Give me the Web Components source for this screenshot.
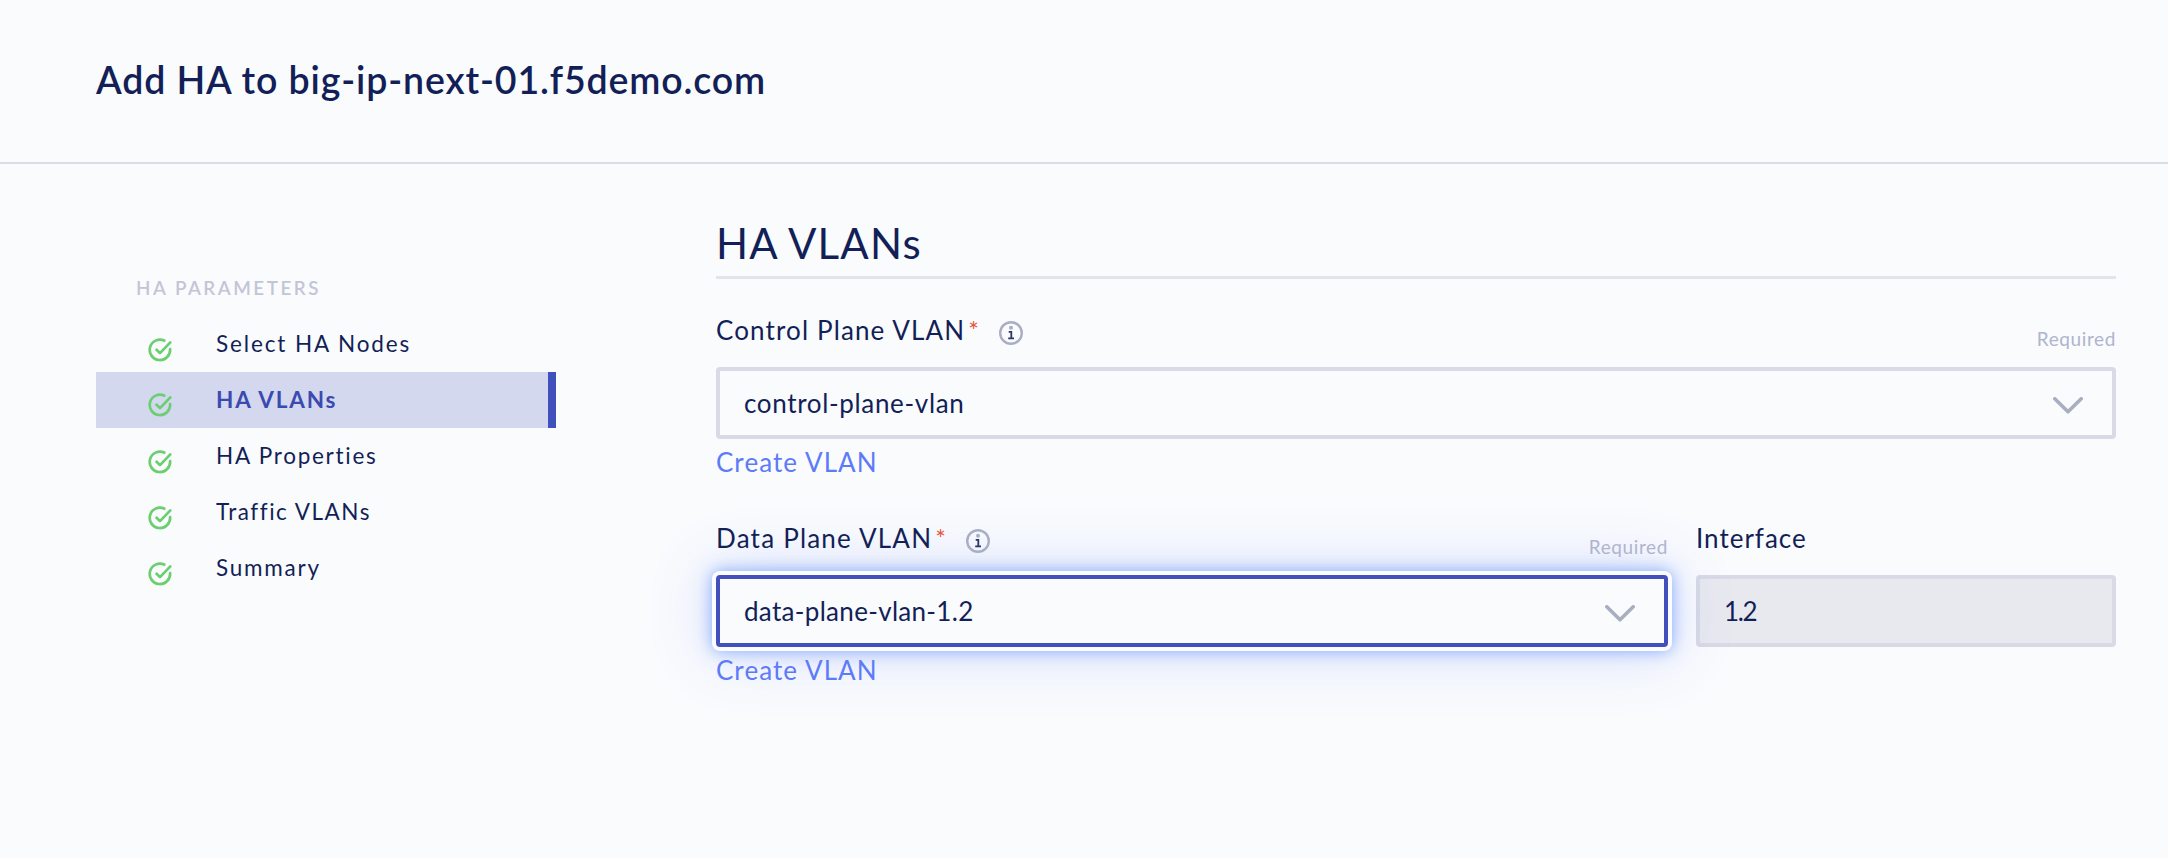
<!DOCTYPE html>
<html lang="en">
<head>
<meta charset="utf-8">
<title>Add HA</title>
<style>
html, body { margin: 0; height: 100%; }
body { background: #f9fbfd; color: #131f57; font-family: Lato, "Open Sans", sans-serif; overflow: hidden; }
</style>
</head>
<body>
<ha-page></ha-page>

<template id="t-page">
  <style>
    :host { display: block; height: 858px; }
    header { box-sizing: border-box; height: 164px; border-bottom: 2px solid #dadce6; padding: 0 0 2px 96px; display: flex; align-items: center; }
    h1 { margin: 0; font-size: 37.5px; font-weight: 600; letter-spacing: .86px; line-height: 48px; white-space: nowrap; }
    .body { display: grid; grid-template-columns: 460px 1400px; column-gap: 160px; padding-left: 96px; }
    h2 { box-sizing: border-box; height: 115px; margin: 0 0 28px; padding-top: 54px; line-height: 50px; font-size: 42px; font-weight: 400; letter-spacing: 1.2px; border-bottom: 3px solid #e2e3eb; }
    .row { display: grid; grid-template-columns: 952px 420px; column-gap: 28px; margin-top: 32px; }
  </style>
  <header><h1>Add HA to big-ip-next-01.f5demo.com</h1></header>
  <div class="body">
    <ha-steps>
      <ha-step style="--ls:1.874px">Select HA Nodes</ha-step>
      <ha-step active style="--ls:1.812px">HA VLANs</ha-step>
      <ha-step style="--ls:1.74px">HA Properties</ha-step>
      <ha-step style="--ls:1.512px">Traffic VLANs</ha-step>
      <ha-step style="--ls:1.765px">Summary</ha-step>
    </ha-steps>
    <main>
      <h2>HA VLANs</h2>
      <ha-field required link style="--label-ls:1.13px;--value-ls:.66px">
        <span slot="label">Control Plane VLAN</span>control-plane-vlan<span slot="link">Create VLAN</span>
      </ha-field>
      <div class="row">
        <ha-field required link focused style="--label-ls:1.21px;--value-ls:.31px">
          <span slot="label">Data Plane VLAN</span>data-plane-vlan-1.2<span slot="link">Create VLAN</span>
        </ha-field>
        <ha-field disabled style="--label-ls:1px;--value-ls:-1.4px">
          <span slot="label">Interface</span>1.2
        </ha-field>
      </div>
    </main>
  </div>
</template>

<template id="t-steps">
  <style>
    :host { display: block; padding-top: 107px; }
    h3 { box-sizing: border-box; margin: 0 0 14px; padding: 1px 0 0 40px; height: 31px; line-height: 31px; font-size: 18.8px; font-weight: 600; letter-spacing: 2.52px; color: #c3c5d6; }
  </style>
  <h3>HA PARAMETERS</h3>
  <slot></slot>
</template>

<template id="t-step">
  <style>
    :host { box-sizing: border-box; display: grid; grid-template-columns: 24px auto; column-gap: 44px; align-items: center; height: 56px; padding-left: 52px; font-size: 22.5px; letter-spacing: var(--ls); color: #131f57; }
    :host([active]) { background: #d4d8ee; border-right: 8px solid #4150bd; color: #3b4ab0; font-weight: 700; }
    svg { display: block; margin-top: 12px; }
    :host([active]) svg { margin-top: 10px; }
    .text { line-height: 30px; white-space: nowrap; }
  </style>
  <svg width="24" height="24" viewBox="0 0 24 24" fill="none" stroke="#6bce70" stroke-width="2.7" stroke-linecap="round" stroke-linejoin="round">
    <path d="M16.2 2.6A10.2 10.2 0 1 0 22.1 11.2"/><path d="M8.6 11.7L12 15.1L22.3 4.4"/>
  </svg>
  <span class="text"><slot></slot></span>
</template>

<template id="t-field">
  <style>
    :host { display: block; font-size: 26px; }
    .head { display: flex; align-items: center; height: 44px; margin-bottom: 16px; line-height: 44px; white-space: nowrap; }
    .label { letter-spacing: var(--label-ls); padding-top: 2px; }
    .star { width: 12px; margin-left: 3px; padding-top: 2px; font-size: 25px; line-height: 44px; color: #e8553a; }
    .info { margin: 8px 0 0 19px; }
    .req { margin-left: auto; padding-top: 19px; font-size: 19px; letter-spacing: .619px; color: #b0b4ce; }
    .box { box-sizing: border-box; height: 72px; border: 4px solid #d8dae5; border-radius: 4px; padding: 0 29px 0 24px; display: flex; align-items: center; justify-content: space-between; background: #f9fbfd; }
    .value { letter-spacing: var(--value-ls); line-height: 40px; }
    .chev { margin-top: 0; }
    .link { height: 43px; padding-top: 1px; line-height: 44px; color: #5d7af8; letter-spacing: 1.08px; }
    :host([focused]) .box { position: relative; border-color: #4150bd; box-shadow: 0 0 0 4px #fbfcff, 0 0 16px 4px rgba(70,125,250,.6), 0 0 62px 7px rgba(84,112,250,.2); }
    :host([focused]) .head, :host([focused]) .link { position: relative; z-index: 1; }
    :host([disabled]) .box { background: #e8e9ef; }
    :host([disabled]) .chev, :host(:not([required])) .star, :host(:not([required])) .info, :host(:not([required])) .req, :host(:not([link])) .link { display: none; }
  </style>
  <div class="head">
    <span class="label"><slot name="label"></slot></span><span class="star">*</span>
    <svg class="info" width="24" height="24" viewBox="0 0 24 24" fill="none">
      <circle cx="12" cy="12" r="10.8" stroke="#a9aec5" stroke-width="2.4"/>
      <circle cx="12" cy="6.7" r="2" fill="#a9aec5"/>
      <path d="M9.7 10.8H12.3V17.3M9.2 17.3H15" stroke="#2b3568" stroke-width="1.8"/>
    </svg>
    <span class="req">Required</span>
  </div>
  <div class="box">
    <span class="value"><slot></slot></span>
    <svg class="chev" width="30" height="17" viewBox="0 0 30 17" fill="none" stroke="#a9aec2" stroke-width="3.6" stroke-linecap="round" stroke-linejoin="round" style="margin-top:4px"><path d="M1.8 1.8L15 14.8L28.2 1.8"/></svg>
  </div>
  <div class="link"><slot name="link"></slot></div>
</template>

<script>
const define = (name, id) => customElements.define(name, class extends HTMLElement {
  constructor() {
    super();
    this.attachShadow({ mode: 'open' }).append(document.getElementById(id).content.cloneNode(true));
  }
});
define('ha-step', 't-step');
define('ha-steps', 't-steps');
define('ha-field', 't-field');
define('ha-page', 't-page');
</script>
</body>
</html>
